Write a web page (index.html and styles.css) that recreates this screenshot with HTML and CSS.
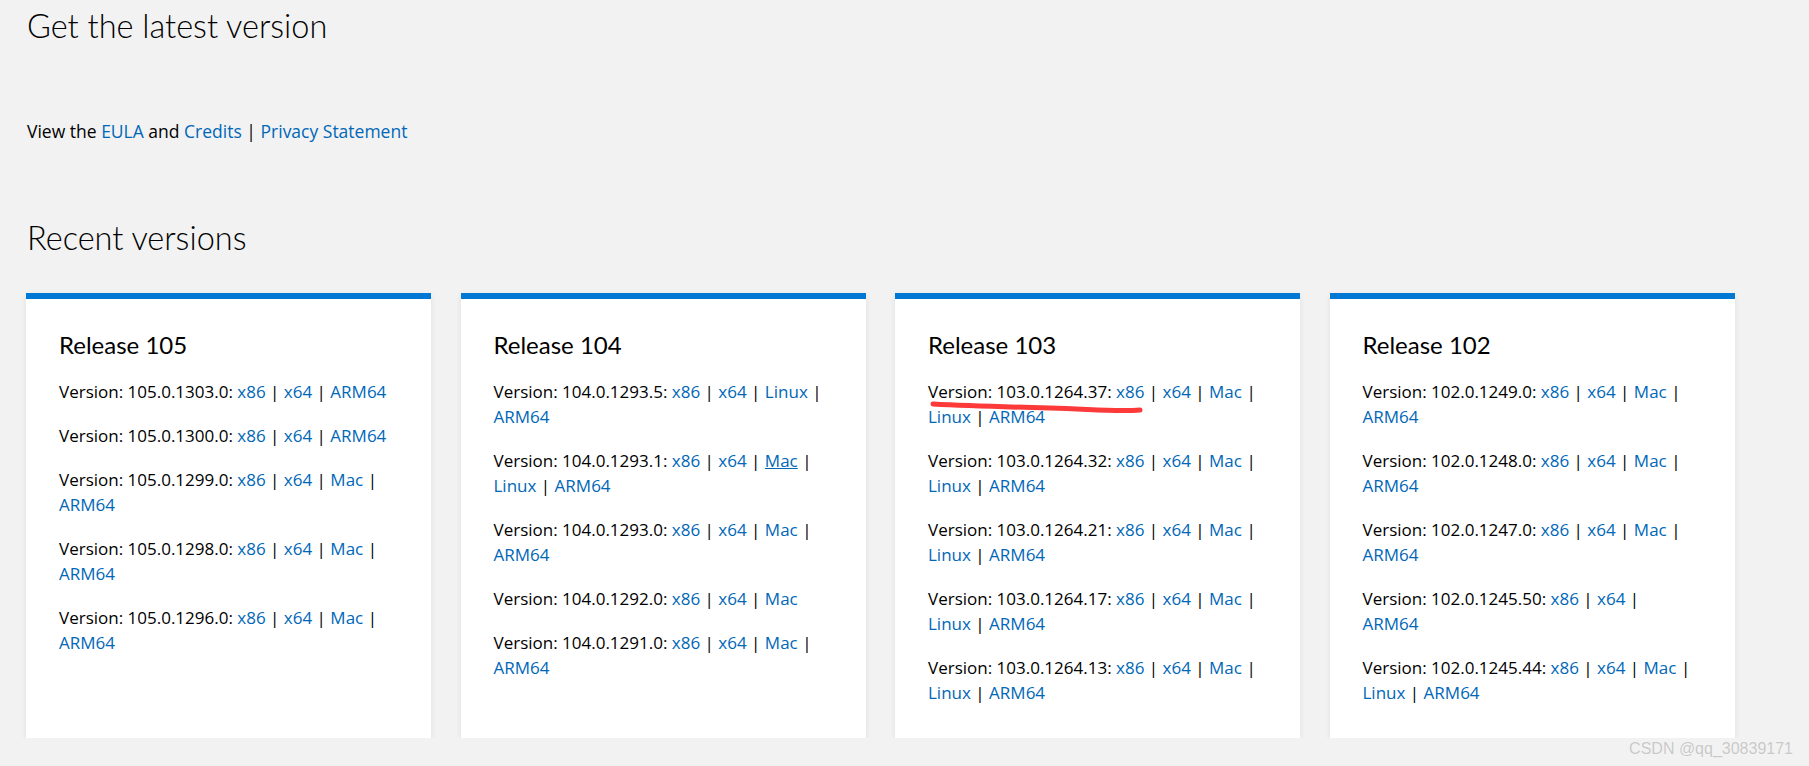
FILE: index.html
```html
<!DOCTYPE html>
<html lang="en">
<head>
    <meta charset="UTF-8">
    <title>Microsoft Edge WebView2 - Downloads</title>
    <link rel="stylesheet" href="styles.css">
</head>
<body>
    <div class="page">
        <h1 class="section-title">Get the latest version</h1>
        <p class="legal-line">View the <a href="#">EULA</a> and <a href="#">Credits</a> | <a href="#">Privacy Statement</a></p>

        <h2 class="section-title recent-title">Recent versions</h2>

        <div class="release-grid">
            <div class="release-card">
                <h3 class="release-heading">Release 105</h3>
                <p class="version-item">Version: 105.0.1303.0: <a href="#">x86</a> | <a href="#">x64</a> | <a href="#">ARM64</a></p>
                <p class="version-item">Version: 105.0.1300.0: <a href="#">x86</a> | <a href="#">x64</a> | <a href="#">ARM64</a></p>
                <p class="version-item">Version: 105.0.1299.0: <a href="#">x86</a> | <a href="#">x64</a> | <a href="#">Mac</a> | <a href="#">ARM64</a></p>
                <p class="version-item">Version: 105.0.1298.0: <a href="#">x86</a> | <a href="#">x64</a> | <a href="#">Mac</a> | <a href="#">ARM64</a></p>
                <p class="version-item">Version: 105.0.1296.0: <a href="#">x86</a> | <a href="#">x64</a> | <a href="#">Mac</a> | <a href="#">ARM64</a></p>
            </div>
            <div class="release-card">
                <h3 class="release-heading">Release 104</h3>
                <p class="version-item">Version: 104.0.1293.5: <a href="#">x86</a> | <a href="#">x64</a> | <a href="#">Linux</a> | <a href="#">ARM64</a></p>
                <p class="version-item">Version: 104.0.1293.1: <a href="#">x86</a> | <a href="#">x64</a> | <a href="#" class="hovered">Mac</a> | <a href="#">Linux</a> | <a href="#">ARM64</a></p>
                <p class="version-item">Version: 104.0.1293.0: <a href="#">x86</a> | <a href="#">x64</a> | <a href="#">Mac</a> | <a href="#">ARM64</a></p>
                <p class="version-item">Version: 104.0.1292.0: <a href="#">x86</a> | <a href="#">x64</a> | <a href="#">Mac</a></p>
                <p class="version-item">Version: 104.0.1291.0: <a href="#">x86</a> | <a href="#">x64</a> | <a href="#">Mac</a> | <a href="#">ARM64</a></p>
            </div>
            <div class="release-card">
                <h3 class="release-heading">Release 103</h3>
                <p class="version-item marked">Version: 103.0.1264.37: <a href="#">x86</a> | <a href="#">x64</a> | <a href="#">Mac</a> | <a href="#">Linux</a> | <a href="#">ARM64</a>
                    <svg class="red-mark" width="214" height="18" viewBox="0 0 214 18">
                        <path d="M3 4 C 40 6, 80 7, 120 8 S 185 12, 210 10" fill="none" stroke="#fd3a3a" stroke-width="5" stroke-linecap="round"/>
                    </svg>
                </p>
                <p class="version-item">Version: 103.0.1264.32: <a href="#">x86</a> | <a href="#">x64</a> | <a href="#">Mac</a> | <a href="#">Linux</a> | <a href="#">ARM64</a></p>
                <p class="version-item">Version: 103.0.1264.21: <a href="#">x86</a> | <a href="#">x64</a> | <a href="#">Mac</a> | <a href="#">Linux</a> | <a href="#">ARM64</a></p>
                <p class="version-item">Version: 103.0.1264.17: <a href="#">x86</a> | <a href="#">x64</a> | <a href="#">Mac</a> | <a href="#">Linux</a> | <a href="#">ARM64</a></p>
                <p class="version-item">Version: 103.0.1264.13: <a href="#">x86</a> | <a href="#">x64</a> | <a href="#">Mac</a> | <a href="#">Linux</a> | <a href="#">ARM64</a></p>
            </div>
            <div class="release-card">
                <h3 class="release-heading">Release 102</h3>
                <p class="version-item">Version: 102.0.1249.0: <a href="#">x86</a> | <a href="#">x64</a> | <a href="#">Mac</a> | <a href="#">ARM64</a></p>
                <p class="version-item">Version: 102.0.1248.0: <a href="#">x86</a> | <a href="#">x64</a> | <a href="#">Mac</a> | <a href="#">ARM64</a></p>
                <p class="version-item">Version: 102.0.1247.0: <a href="#">x86</a> | <a href="#">x64</a> | <a href="#">Mac</a> | <a href="#">ARM64</a></p>
                <p class="version-item">Version: 102.0.1245.50: <a href="#">x86</a> | <a href="#">x64</a> | <a href="#">ARM64</a></p>
                <p class="version-item">Version: 102.0.1245.44: <a href="#">x86</a> | <a href="#">x64</a> | <a href="#">Mac</a> | <a href="#">Linux</a> | <a href="#">ARM64</a></p>
            </div>
        </div>
    </div>
    <div class="watermark">CSDN @qq_30839171</div>
</body>
</html>
```

FILE: styles.css
```css
body {
    margin: 0;
    padding: 0;
    background-color: #f2f2f2;
    font-family: "Open Sans", "Noto Sans", sans-serif;
    color: #000000;
    overflow: hidden;
}

.page {
    padding: 0 26px;
}

.section-title {
    font-family: Lato, "Open Sans", sans-serif;
    font-size: 32.5px;
    font-weight: 300;
    line-height: 44px;
    margin: 4px 0 0 1px;
}

.legal-line {
    font-size: 17.5px;
    line-height: 24px;
    margin: 71px 0 0 1px;
}

.recent-title {
    margin-top: 72.5px;
}

a {
    color: #0067b8;
    text-decoration: none;
}

a.hovered {
    text-decoration: underline;
}

.release-grid {
    display: grid;
    grid-template-columns: repeat(4, 405px);
    column-gap: 29.5px;
    margin-top: 33.5px;
}

.release-card {
    background-color: #ffffff;
    border-top: 6px solid #0078d4;
    box-shadow: 0 2px 6px rgba(0, 0, 0, 0.08);
    padding: 30px 40px 14px 33px;
}

.release-heading {
    font-family: Lato, "Open Sans", sans-serif;
    font-size: 24px;
    font-weight: 400;
    line-height: 32px;
    margin: 0 0 17.5px 0;
}

.version-item {
    font-size: 17px;
    line-height: 25px;
    margin: 0 0 19px 0;
}

.marked {
    position: relative;
}

.red-mark {
    position: absolute;
    left: 2px;
    top: 21px;
}

.watermark {
    position: absolute;
    right: 16px;
    bottom: 8px;
    font-family: "Liberation Sans", Arial, sans-serif;
    font-size: 16px;
    color: #c8c8c8;
    text-shadow: 0 0 1px #ffffff;
}
```
